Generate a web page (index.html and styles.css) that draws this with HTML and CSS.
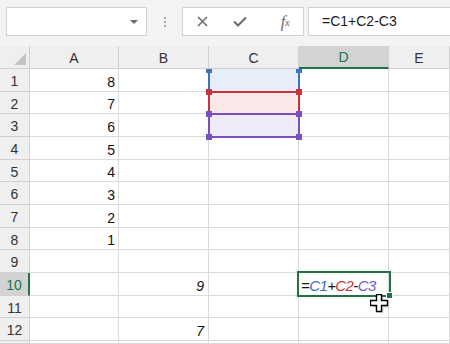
FILE: index.html
```html
<!DOCTYPE html>
<html>
<head>
<meta charset="utf-8">
<link rel="stylesheet" href="styles.css">
</head>
<body>
<div class="bar">
  <div class="namebox"><span class="caret"></span></div>
  <div class="sep"><i></i><i></i><i></i></div>
  <div class="tools">
    <span class="tool"><svg width="11" height="11" viewBox="0 0 11 11"><path d="M1 1L10 10M10 1L1 10" stroke="#6a6a6a" stroke-width="1.5" fill="none"/></svg></span>
    <span class="tool"><svg width="14" height="11" viewBox="0 0 14 11"><path d="M1 5.5L5 9.5L13 1.5" stroke="#6a6a6a" stroke-width="2" fill="none"/></svg></span>
    <span class="tool fx"><i>f</i><sub>x</sub></span>
  </div>
  <div class="formula">=C1+C2-C3</div>
</div>
<div class="sheet">
  <div class="hd corner"><span class="tri"></span></div><div class="hd">A</div><div class="hd">B</div><div class="hd">C</div><div class="hd sel">D</div><div class="hd">E</div>

  <div class="rh">1</div><div class="c n">8</div><div class="c"></div><div class="c rng"><span class="box blue"><b class="k tl"></b><b class="k tr"></b></span></div><div class="c"></div><div class="c"></div>
  <div class="rh">2</div><div class="c n">7</div><div class="c"></div><div class="c rng"><span class="box red"><b class="k tl"></b><b class="k tr"></b></span></div><div class="c"></div><div class="c"></div>
  <div class="rh">3</div><div class="c n">6</div><div class="c"></div><div class="c rng"><span class="box purple"><b class="k tl"></b><b class="k tr"></b><b class="k bl"></b><b class="k br"></b></span></div><div class="c"></div><div class="c"></div>
  <div class="rh">4</div><div class="c n">5</div><div class="c"></div><div class="c"></div><div class="c"></div><div class="c"></div>
  <div class="rh">5</div><div class="c n">4</div><div class="c"></div><div class="c"></div><div class="c"></div><div class="c"></div>
  <div class="rh">6</div><div class="c n">3</div><div class="c"></div><div class="c"></div><div class="c"></div><div class="c"></div>
  <div class="rh">7</div><div class="c n">2</div><div class="c"></div><div class="c"></div><div class="c"></div><div class="c"></div>
  <div class="rh">8</div><div class="c n">1</div><div class="c"></div><div class="c"></div><div class="c"></div><div class="c"></div>
  <div class="rh">9</div><div class="c"></div><div class="c"></div><div class="c"></div><div class="c"></div><div class="c"></div>
  <div class="rh selr">10</div><div class="c"></div><div class="c n it">9</div><div class="c"></div><div class="c active"><span class="edit"><span class="fml"><span>=</span><span class="cb">C1</span><span>+</span><span class="cr">C2</span><span>-</span><span class="cp">C3</span></span><b class="handle"></b></span><svg class="cursor" width="19" height="19" viewBox="0 0 19 19"><path d="M7.5 2.5H12.5V7.5H17.5V12.5H12.5V17.5H7.5V12.5H2.5V7.5H7.5Z" fill="#9a9a9a" opacity="0.45" transform="translate(1 1)"/><path d="M6.5 0.5H11.5V6.5H17.5V11.5H11.5V17.5H6.5V11.5H0.5V6.5H6.5Z" fill="#fff" stroke="#000" stroke-width="1.4"/></svg></div><div class="c"></div>
  <div class="rh">11</div><div class="c"></div><div class="c"></div><div class="c"></div><div class="c"></div><div class="c"></div>
  <div class="rh">12</div><div class="c"></div><div class="c n it">7</div><div class="c"></div><div class="c"></div><div class="c"></div>
  <div class="rh"></div><div class="c"></div><div class="c"></div><div class="c"></div><div class="c"></div><div class="c"></div>
</div>
</body>
</html>
```
FILE: styles.css
```css
html, body {
  margin: 0;
  padding: 0;
}
body {
  width: 450px;
  height: 344px;
  overflow: hidden;
  background: #f3f3f3;
  font-family: "Liberation Sans", Arial, sans-serif;
  color: #111;
}
.bar {
  height: 46px;
  box-sizing: border-box;
  padding: 7px 0 0 6px;
  display: flex;
  align-items: flex-start;
}
.namebox {
  width: 141px;
  height: 29px;
  box-sizing: border-box;
  background: #fff;
  border: 1px solid #d2d2d2;
  position: relative;
}
.caret {
  position: absolute;
  right: 8px;
  top: 12px;
  width: 0;
  height: 0;
  border-left: 4px solid transparent;
  border-right: 4px solid transparent;
  border-top: 4px solid #6a6a6a;
}
.sep {
  width: 35px;
  height: 29px;
  display: flex;
  flex-direction: column;
  align-items: center;
  justify-content: center;
  gap: 2px;
}
.sep i {
  display: block;
  width: 2px;
  height: 2px;
  background: #a8a8a8;
}
.tools {
  width: 122px;
  height: 29px;
  box-sizing: border-box;
  background: #fff;
  border: 1px solid #d2d2d2;
  display: flex;
  align-items: center;
}
.tool {
  display: flex;
  justify-content: center;
  align-items: center;
  width: 39px;
}
.tool.fx {
  width: 44px;
  padding-left: 8px;
  box-sizing: border-box;
  font-family: "Liberation Serif", serif;
  color: #6a6a6a;
  font-size: 16px;
  line-height: 16px;
}
.fx i { font-style: italic; }
.fx sub {
  font-style: italic;
  font-size: 11px;
  vertical-align: -1px;
}
.formula {
  flex: 1;
  margin-left: 4px;
  margin-right: -2px;
  height: 29px;
  box-sizing: border-box;
  background: #fff;
  border: 1px solid #d2d2d2;
  font-size: 14px;
  line-height: 27px;
  padding-left: 13px;
  color: #1a1a1a;
}
.sheet {
  display: grid;
  grid-template-columns: 30px 89px 90px 90px 90px 1fr;
  grid-template-rows: 23px 23px 22px 23px 23px 22px 23px 23px 22px 23px 23px 22px 23px 3px;
  font-size: 14px;
  line-height: 16px;
}
.sheet > div {
  box-sizing: border-box;
  border-right: 1px solid #dadada;
  border-bottom: 1px solid #dadada;
}
.hd, .rh {
  background: #efefef;
  color: #333;
  display: flex;
  justify-content: center;
  align-items: center;
}
.sheet > .hd, .sheet > .rh {
  border-color: #d0d0d0;
}
.hd {
  padding-top: 1px;
}
.rh {
  padding-top: 2px;
}
.corner {
  position: relative;
}
.tri {
  position: absolute;
  right: 3px;
  bottom: 3px;
  width: 0;
  height: 0;
  border-left: 12px solid transparent;
  border-bottom: 12px solid #c4c4c4;
}
.sheet > .hd.sel {
  background: #d3d3d3;
  color: #217346;
  border-bottom: 2px solid #217346;
}
.sheet > .rh.selr {
  background: #d3d3d3;
  color: #217346;
  border-right: 2px solid #217346;
}
.c {
  background: #fff;
}
.n {
  display: flex;
  justify-content: flex-end;
  align-items: flex-end;
  padding: 0 3px 1px 0;
}
.it {
  font-style: italic;
  padding-right: 4px;
}
.rng, .active {
  position: relative;
}
.box {
  position: absolute;
  left: -1px;
  top: -1px;
  right: -2px;
  bottom: -2px;
  border: 2px solid;
  z-index: 1;
}
.box.blue {
  border-color: #3f72c0;
  border-top-color: transparent;
  background: #e7eef9;
  top: 0;
}
.box.red {
  border-color: #c8323c;
  background: #fbe8e9;
}
.box.purple {
  border-color: #7a4fc1;
  background: #efebf8;
}
.k {
  position: absolute;
  width: 6px;
  height: 6px;
}
.blue .k { background: #3f72c0; }
.red .k { background: #c8323c; }
.purple .k { background: #7a4fc1; }
.k.tl { left: -4px; top: -4px; }
.k.tr { right: -4px; top: -4px; }
.k.bl { left: -4px; bottom: -4px; }
.k.br { right: -4px; bottom: -4px; }
.blue .k.tl, .blue .k.tr { top: -2px; height: 4px; }
.edit {
  position: absolute;
  left: -2px;
  top: -2px;
  right: -3px;
  bottom: -2px;
  border: 2px solid #217346;
  z-index: 2;
  display: flex;
  align-items: flex-end;
}
.fml {
  font-style: italic;
  font-size: 15px;
  line-height: 17px;
  padding-left: 2px;
  padding-bottom: 1px;
  color: #1a1a1a;
  letter-spacing: -0.6px;
}
.cb { color: #3a6fc4; }
.cr { color: #c8323c; }
.cp { color: #7a55c6; }
.handle {
  position: absolute;
  right: -4px;
  bottom: -4px;
  width: 5px;
  height: 5px;
  background: #217346;
  border: 1px solid #fff;
}
.cursor {
  position: absolute;
  left: 71px;
  top: 21px;
  z-index: 3;
}
```
